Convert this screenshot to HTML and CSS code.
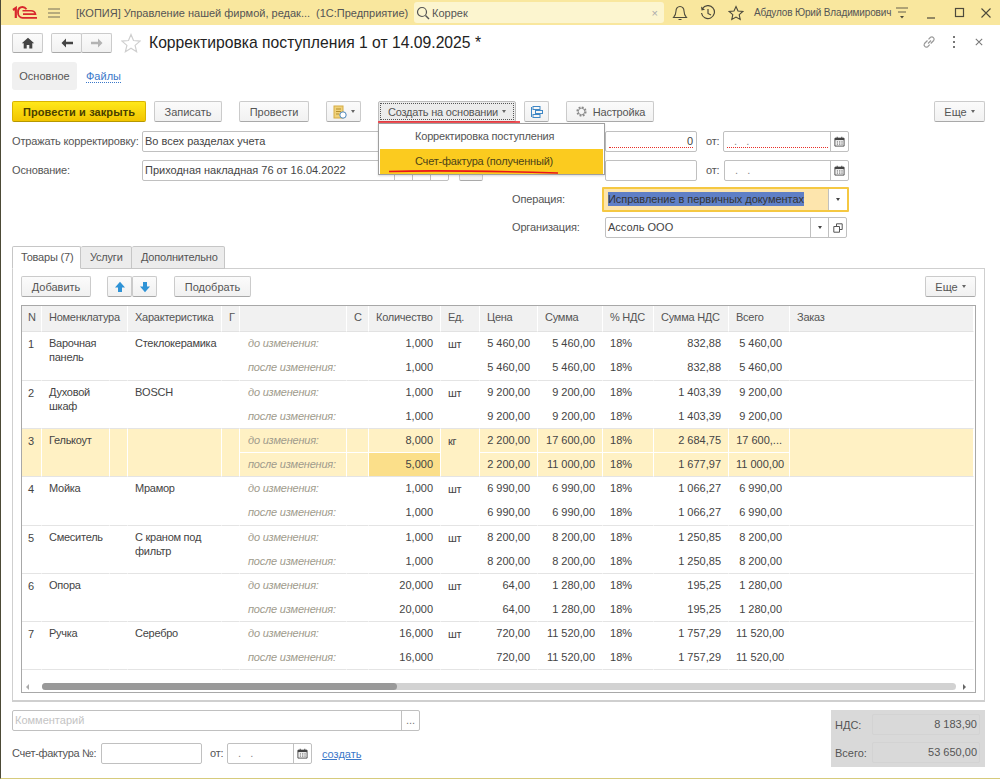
FILE: index.html
```html
<!DOCTYPE html>
<html lang="ru">
<head>
<meta charset="utf-8">
<title>Корректировка поступления</title>
<link rel="stylesheet" href="styles.css">
</head>
<body>
<div class="window">
  <header class="titlebar">
    <svg class="logo" viewBox="0 0 25 13" width="25" height="13"><path d="M1 4l2.800-2V12" stroke="#d8262c" stroke-width="2.200" fill="none"/><path d="M14.500 3.200C13.500 1.800 12.300 1 10.500 1 7.500 1 6 3.500 6 6.500s2 5.300 4.500 5.300H25" stroke="#d8262c" stroke-width="1.800" fill="none"/><path d="M10.500 4.800H19c2.500 0 4 1 4.500 3.300H11" stroke="#d8262c" stroke-width="1.600" fill="none"/></svg>
    <svg class="ti menu" viewBox="0 0 14 12" width="14" height="12"><path d="M1 2h12M1 6h12M1 10h12" stroke="#77705a" stroke-width="1.200" fill="none"/></svg>
    <span class="apptitle">[КОПИЯ] Управление нашей фирмой, редак...</span>
    <span class="appname">(1С:Предприятие)</span>
    <div class="search">
      <svg viewBox="0 0 14 14" width="14" height="14"><circle cx="6" cy="6" r="4.500" stroke="#555" stroke-width="1.200" fill="none"/><path d="M9.500 9.500L13 13" stroke="#555" stroke-width="1.400"/></svg>
      <span class="searchtext">Коррек</span>
      <span class="searchx">×</span>
    </div>
    <svg class="ti bell" viewBox="0 0 16 16" width="16" height="16"><path d="M8 1.500c-2.600 0-4 2-4 4.500 0 3-1.200 5-2.500 6.500h13C13.200 11 12 9 12 6c0-2.500-1.400-4.500-4-4.500zM6.500 14.500h3" stroke="#4d4a3c" stroke-width="1.100" fill="none"/></svg>
    <svg class="ti hist" viewBox="0 0 16 16" width="16" height="16"><path d="M2.500 3.500A6.500 6.500 0 1 1 1.500 8M8 4v4.500l3 1.500" stroke="#4d4a3c" stroke-width="1.200" fill="none"/><path d="M1 1.500l.5 4 3.500-.8z" fill="#4d4a3c"/></svg>
    <svg class="ti fav" viewBox="0 0 16 16" width="16" height="16"><path d="M8 1.500l2 4.500 4.800.5-3.600 3.200 1 4.800L8 12.100l-4.200 2.400 1-4.800L1.200 6.500 6 6z" stroke="#4d4a3c" stroke-width="1.100" fill="none"/></svg>
    <span class="user">Абдулов Юрий Владимирович</span>
    <svg class="ti usermenu" viewBox="0 0 14 14" width="14" height="14"><path d="M1 2h12M3 6h8" stroke="#66614c" stroke-width="1.200" fill="none"/><path d="M5 10h4l-2 2.500z" fill="#4d4a3c"/></svg>
    <svg class="ti wmin" viewBox="0 0 12 12" width="12" height="12"><path d="M2 11h8" stroke="#4d4a3c" stroke-width="1.200"/></svg>
    <svg class="ti wmax" viewBox="0 0 12 12" width="12" height="12"><rect x="1.500" y="1.500" width="8" height="8" stroke="#4d4a3c" stroke-width="1.200" fill="none"/></svg>
    <svg class="ti wclose" viewBox="0 0 12 12" width="12" height="12"><path d="M1.500 1.500l9 9M10.500 1.500l-9 9" stroke="#4d4a3c" stroke-width="1.100"/></svg>
  </header>

  <main class="form">
    <div class="head">
      <button class="btn home"><svg viewBox="0 0 14 12" width="14" height="12"><path d="M7 .8L.8 6.200h1.900V11.500h3V8h2.600v3.500h3V6.200h1.900z" fill="#444"/></svg></button>
      <div class="navpair">
        <button class="btn nav"><svg viewBox="0 0 14 12" width="14" height="12"><path d="M6 1.500L1.500 6 6 10.500V7.300h7V4.700H6z" fill="#444"/></svg></button>
        <button class="btn nav"><svg viewBox="0 0 14 12" width="14" height="12"><path d="M8 1.500L12.500 6 8 10.500V7.300H1V4.700h7z" fill="#b3b3b3"/></svg></button>
      </div>
      <svg class="star" viewBox="0 0 20 20" width="20" height="20"><path d="M10 1.500l2.500 6 6.500.6-4.900 4.300 1.500 6.300L10 15.300l-5.600 3.400 1.500-6.300L1 8.100l6.500-.6z" stroke="#cfcfcf" stroke-width="1.200" fill="#fff"/></svg>
      <h1 class="doctitle">Корректировка поступления 1 от 14.09.2025 *</h1>
      <div class="headicons">
        <svg viewBox="0 0 14 14" width="14" height="14"><path d="M6 8.500l3-3M5.500 5.500L2.500 8.500a2.300 2.300 0 0 0 3.200 3.200l2-2M6.500 4.300l2-2a2.300 2.300 0 0 1 3.200 3.200l-3 3" stroke="#999" stroke-width="1.200" fill="none"/></svg>
        <svg class="dots" viewBox="0 0 6 14" width="6" height="14"><path d="M3 1v2M3 6v2M3 11v2" stroke="#777" stroke-width="2"/></svg>
        <svg class="closex" viewBox="0 0 10 10" width="8" height="8"><path d="M1 1l8 8M9 1L1 9" stroke="#777" stroke-width="1.300"/></svg>
      </div>
    </div>

    <nav class="pages">
      <span class="page-active">Основное</span>
      <a class="page-link">Файлы</a>
    </nav>

    <div class="cmdbar">
      <button class="btn primary w-post">Провести и закрыть</button>
      <button class="btn w-save">Записать</button>
      <button class="btn w-conduct">Провести</button>
      <button class="btn w-print"><svg viewBox="0 0 14 14" width="14" height="14"><rect x="1" y="1" width="9" height="12" fill="#f0d27a" stroke="#d5ab45"/><path d="M3 4h5M3 6.500h5M3 9h3" stroke="#b58e2c"/><circle cx="10" cy="10" r="3.200" fill="#fff" stroke="#4a84b8"/></svg><i class="caret"></i></button>
      <button class="btn w-create"><span class="focus">Создать на основании<i class="caret"></i></span></button>
      <button class="btn w-struct"><svg viewBox="0 0 14 14" width="14" height="14"><rect x="3" y="1.500" width="7" height="3" fill="none" stroke="#3f87c5"/><rect x="5.500" y="5.500" width="7" height="3" fill="none" stroke="#3f87c5"/><rect x="3" y="9.500" width="7" height="3" fill="none" stroke="#3f87c5"/><path d="M1.500 2v10" stroke="#3f87c5"/></svg></button>
      <button class="btn w-setup"><svg viewBox="0 0 14 14" width="13" height="13"><circle cx="7" cy="7" r="4.500" fill="none" stroke="#8a8a8a" stroke-width="2" stroke-dasharray="2 1.500"/><circle cx="7" cy="7" r="3.500" fill="none" stroke="#8a8a8a"/></svg>Настройка</button>
      <button class="btn more w-more">Еще <i class="caret"></i></button>
    </div>

    <div class="fields">
      <div class="row">
        <label class="lbl lbl-main">Отражать корректировку:</label>
        <div class="input w-reflect">Во всех разделах учета</div>
        <span class="gap-number"></span>
        <div class="input num req w-number"><span class="val">0</span></div>
        <label class="lbl lbl-from lbl-from1">от:</label>
        <div class="input date req w-date"><span class="mask">.&nbsp;&nbsp;&nbsp;.</span><span class="calbtn"><svg viewBox="0 0 12 12" width="11" height="11"><use href="#cal"/></svg></span></div>
      </div>
      <div class="row">
        <label class="lbl lbl-main">Основание:</label>
        <div class="input w-base">Приходная накладная 76 от 16.04.2022<span class="fbtn"></span><span class="fbtn"></span><span class="fbtn"></span></div>
        <button class="btn w-basebtn"></button>
        <span class="gap-doc"></span>
        <div class="input w-number2"></div>
        <label class="lbl lbl-from">от:</label>
        <div class="input date w-date2"><span class="mask">.&nbsp;&nbsp;&nbsp;.</span><span class="calbtn"><svg viewBox="0 0 12 12" width="11" height="11"><use href="#cal"/></svg></span></div>
      </div>
      <div class="row row-op">
        <label class="lbl lbl-right">Операция:</label>
        <div class="input focused"><span class="selection">Исправление в первичных документах</span><span class="dropbtn"><i class="caret dark"></i></span></div>
      </div>
      <div class="row row-org">
        <label class="lbl lbl-right">Организация:</label>
        <div class="input w-org">Ассоль ООО<span class="dropbtn"><i class="caret dark"></i></span><span class="openbtn"><svg viewBox="0 0 10 10" width="10" height="10"><path d="M3.500 3V.8h5.700v5.700H7M.8 3.500h5.700v5.700H.8z" stroke="#555" fill="none"/></svg></span></div>
      </div>
    </div>

    <div class="tabs">
      <span class="tab tab-active">Товары (7)</span>
      <span class="tab">Услуги</span>
      <span class="tab">Дополнительно</span>
    </div>

    <section class="panel">
      <div class="tblbar">
        <button class="btn w-add">Добавить</button>
        <div class="arrows">
          <button class="btn arrow"><svg viewBox="0 0 12 12" width="12" height="12"><path d="M6 .8L11 6.500H8V11H4V6.500H1z" fill="#2f93d6"/></svg></button>
          <button class="btn arrow"><svg viewBox="0 0 12 12" width="12" height="12"><path d="M6 11.200L11 5.500H8V1H4v4.500H1z" fill="#2f93d6"/></svg></button>
        </div>
        <button class="btn w-pick">Подобрать</button>
        <button class="btn more w-more2">Еще <i class="caret"></i></button>
      </div>
      <div class="grid">
        <table class="goods">
          <colgroup>
            <col class="c-n"><col class="c-name"><col class="c-name2"><col class="c-char"><col class="c-g"><col class="c-note"><col class="c-s"><col class="c-qty"><col class="c-ed"><col class="c-price"><col class="c-sum"><col class="c-vat"><col class="c-vatsum"><col class="c-total"><col class="c-order">
          </colgroup>
          <thead>
            <tr><th>N</th><th colspan="2">Номенклатура</th><th>Характеристика</th><th>Г</th><th></th><th>С</th><th>Количество</th><th>Ед.</th><th>Цена</th><th>Сумма</th><th>% НДС</th><th>Сумма НДС</th><th>Всего</th><th>Заказ</th></tr>
          </thead>
          <tbody>
            <tr><td rowspan="2" class="top">1</td><td rowspan="2" class="top tight">Варочная панель</td><td rowspan="2"></td><td rowspan="2" class="top tight">Стеклокерамика</td><td rowspan="2"></td><td class="note">до изменения:</td><td></td><td class="r">1,000</td><td rowspan="2" class="top">шт</td><td class="r">5 460,00</td><td class="r">5 460,00</td><td>18%</td><td class="r">832,88</td><td class="r">5 460,00</td><td rowspan="2"></td></tr>
            <tr class="end tall"><td class="note">после изменения:</td><td></td><td class="r">1,000</td><td class="r">5 460,00</td><td class="r">5 460,00</td><td>18%</td><td class="r">832,88</td><td class="r">5 460,00</td></tr>

            <tr><td rowspan="2" class="top">2</td><td rowspan="2" class="top tight">Духовой шкаф</td><td rowspan="2"></td><td rowspan="2" class="top tight">BOSCH</td><td rowspan="2"></td><td class="note">до изменения:</td><td></td><td class="r">1,000</td><td rowspan="2" class="top">шт</td><td class="r">9 200,00</td><td class="r">9 200,00</td><td>18%</td><td class="r">1 403,39</td><td class="r">9 200,00</td><td rowspan="2"></td></tr>
            <tr class="end"><td class="note">после изменения:</td><td></td><td class="r">1,000</td><td class="r">9 200,00</td><td class="r">9 200,00</td><td>18%</td><td class="r">1 403,39</td><td class="r">9 200,00</td></tr>

            <tr class="hl"><td rowspan="2" class="top">3</td><td rowspan="2" class="top tight">Гелькоут</td><td rowspan="2"></td><td rowspan="2" class="top tight"></td><td rowspan="2"></td><td class="note">до изменения:</td><td></td><td class="r">8,000</td><td rowspan="2" class="top">кг</td><td class="r">2 200,00</td><td class="r">17 600,00</td><td>18%</td><td class="r">2 684,75</td><td class="r">17 600,...</td><td rowspan="2"></td></tr>
            <tr class="hl end"><td class="note">после изменения:</td><td></td><td class="r changed">5,000</td><td class="r">2 200,00</td><td class="r">11 000,00</td><td>18%</td><td class="r">1 677,97</td><td class="r">11 000,00</td></tr>

            <tr><td rowspan="2" class="top">4</td><td rowspan="2" class="top tight">Мойка</td><td rowspan="2"></td><td rowspan="2" class="top tight">Мрамор</td><td rowspan="2"></td><td class="note">до изменения:</td><td></td><td class="r">1,000</td><td rowspan="2" class="top">шт</td><td class="r">6 990,00</td><td class="r">6 990,00</td><td>18%</td><td class="r">1 066,27</td><td class="r">6 990,00</td><td rowspan="2"></td></tr>
            <tr class="end tall"><td class="note">после изменения:</td><td></td><td class="r">1,000</td><td class="r">6 990,00</td><td class="r">6 990,00</td><td>18%</td><td class="r">1 066,27</td><td class="r">6 990,00</td></tr>

            <tr><td rowspan="2" class="top">5</td><td rowspan="2" class="top tight">Смеситель</td><td rowspan="2"></td><td rowspan="2" class="top tight">С краном под фильтр</td><td rowspan="2"></td><td class="note">до изменения:</td><td></td><td class="r">1,000</td><td rowspan="2" class="top">шт</td><td class="r">8 200,00</td><td class="r">8 200,00</td><td>18%</td><td class="r">1 250,85</td><td class="r">8 200,00</td><td rowspan="2"></td></tr>
            <tr class="end"><td class="note">после изменения:</td><td></td><td class="r">1,000</td><td class="r">8 200,00</td><td class="r">8 200,00</td><td>18%</td><td class="r">1 250,85</td><td class="r">8 200,00</td></tr>

            <tr><td rowspan="2" class="top">6</td><td rowspan="2" class="top tight">Опора</td><td rowspan="2"></td><td rowspan="2" class="top tight"></td><td rowspan="2"></td><td class="note">до изменения:</td><td></td><td class="r">20,000</td><td rowspan="2" class="top">шт</td><td class="r">64,00</td><td class="r">1 280,00</td><td>18%</td><td class="r">195,25</td><td class="r">1 280,00</td><td rowspan="2"></td></tr>
            <tr class="end"><td class="note">после изменения:</td><td></td><td class="r">20,000</td><td class="r">64,00</td><td class="r">1 280,00</td><td>18%</td><td class="r">195,25</td><td class="r">1 280,00</td></tr>

            <tr><td rowspan="2" class="top">7</td><td rowspan="2" class="top tight">Ручка</td><td rowspan="2"></td><td rowspan="2" class="top tight">Серебро</td><td rowspan="2"></td><td class="note">до изменения:</td><td></td><td class="r">16,000</td><td rowspan="2" class="top">шт</td><td class="r">720,00</td><td class="r">11 520,00</td><td>18%</td><td class="r">1 757,29</td><td class="r">11 520,00</td><td rowspan="2"></td></tr>
            <tr class="end"><td class="note">после изменения:</td><td></td><td class="r">16,000</td><td class="r">720,00</td><td class="r">11 520,00</td><td>18%</td><td class="r">1 757,29</td><td class="r">11 520,00</td></tr>
          </tbody>
        </table>
        <div class="hscroll">
          <i class="sarrow left"></i>
          <div class="track"><div class="thumb"></div></div>
          <i class="sarrow right"></i>
        </div>
      </div>
    </section>

    <footer class="bottom">
      <div class="bottom-left">
        <div class="input comment"><span class="placeholder">Комментарий</span><span class="dotsbtn">...</span></div>
        <div class="invoice">
          <label class="lbl lbl-inv">Счет-фактура №:</label>
          <div class="input w-inv"></div>
          <label class="lbl lbl-invfrom">от:</label>
          <div class="input date w-invdate"><span class="mask">.&nbsp;&nbsp;&nbsp;.</span><span class="calbtn"><svg viewBox="0 0 12 12" width="11" height="11"><use href="#cal"/></svg></span></div>
          <a class="create">создать</a>
        </div>
      </div>
      <aside class="totals">
        <div class="tot"><span class="totlbl">НДС:</span><span class="totval">8 183,90</span></div>
        <div class="tot"><span class="totlbl">Всего:</span><span class="totval">53 650,00</span></div>
      </aside>
    </footer>

    <div class="popup">
      <div class="pitem">Корректировка поступления</div>
      <div class="pitem pitem-active">Счет-фактура (полученный)</div>
    </div>
    <svg class="redlines" viewBox="0 0 240 60" width="240" height="60"><path d="M0 1h142" stroke="#e8141c" stroke-width="1.600" fill="none"/><path d="M11 50.500C60 49 110 50 180 52" stroke="#e8141c" stroke-width="1.600" fill="none"/></svg>
  </main>
  <svg class="defs" width="0" height="0"><symbol id="cal" viewBox="0 0 12 12"><path d="M1 2.500h10V11H1z" fill="none" stroke="#444"/><path d="M1 2h10v2.500H1z" fill="#444"/><path d="M3 6.500h1.500M5.500 6.500H7M8 6.500h1.500M3 8.800h1.500M5.500 8.800H7M8 8.800h1.500" stroke="#444"/><path d="M3.500 .8v2M8.500 .8v2" stroke="#444"/></symbol></svg>
</div>
</body>
</html>
```

FILE: styles.css
```css
* { box-sizing: border-box; }
html, body { margin: 0; padding: 0; }
body { font: 11px/14px "Liberation Sans", Arial, sans-serif; color: #444; background: #fff; }
.window { width: 1000px; height: 779px; border-left: 1px solid #4c4a36; border-bottom: 1px solid #d6cb7c; overflow: hidden; position: relative; background: #fff; }

.titlebar { height: 25px; background: #f9e79e; display: flex; align-items: center; color: #555; font-size: 11px; }
.logo { margin-left: 11px; flex: none; }
.menu { margin-left: 10px; }
.apptitle { margin-left: 15px; width: 240px; white-space: nowrap; }
.appname { white-space: nowrap; width: 98px; }
.search { width: 250px; height: 21px; background: #fcf5cf; border-radius: 3px; display: flex; align-items: center; padding: 0 6px 0 2px; }
.searchtext { margin-left: 2px; flex: 1; color: #555; }
.searchx { color: #aaa; }
.ti { flex: none; }
.bell { margin-left: 8px; }
.hist { margin-left: 12px; }
.fav { margin-left: 12px; }
.user { margin-left: 10px; width: 141px; white-space: nowrap; font-size: 10px; letter-spacing: -.15px; }
.usermenu { margin-left: 0; }
.wmin { margin-left: 16px; }
.wmax { margin-left: 17px; }
.wclose { margin-left: 14px; }

.form { position: relative; padding: 8px 15px 0 11px; }
.btn { display: inline-flex; align-items: center; justify-content: center; height: 21px; padding: 0; font: 11px "Liberation Sans", Arial, sans-serif; color: #555; background: linear-gradient(#fbfbfb, #f1f1f1); border: 1px solid #cbcbcb; border-bottom-color: #a9a9a9; border-radius: 2px; flex: none; }
.caret { display: inline-block; width: 0; height: 0; border: 2.5px solid transparent; border-top: 3px solid #666; border-bottom: 0; vertical-align: middle; margin-left: 4px; }
.caret.dark { border-top-color: #444; margin: 0; }

.head { display: flex; align-items: center; height: 20px; }
.home { width: 31px; height: 20px; }
.navpair { display: flex; margin-left: 8px; }
.nav { width: 31px; height: 20px; }
.nav + .nav { margin-left: -1px; }
.star { margin-left: 9px; flex: none; }
.doctitle { margin: 0 0 0 8px; font-size: 15.7px; font-weight: 400; color: #222; white-space: nowrap; line-height: 20px; }
.headicons { margin: -2px 0 0 auto; display: flex; align-items: center; }
.dots { margin-left: 15px; }
.closex { margin-left: 18px; margin-right: 2px; }

.pages { display: flex; align-items: center; height: 28px; margin-top: 9px; }
.page-active { width: 65px; height: 28px; background: #f0f0f0; border-radius: 3px; line-height: 28px; text-align: center; color: #555; }
.page-link { margin-left: 9px; color: #3b78c9; border-bottom: 1px dotted #3b78c9; line-height: 12px; }

.cmdbar { display: flex; margin-top: 11px; height: 21px; }
.primary { background: linear-gradient(#ffe81a, #f2c500); border-color: #d9b400; border-bottom-color: #b69800; color: #4a4000; font-weight: 700; letter-spacing: .1px; }
.w-post { width: 134px; }
.w-save { width: 68px; margin-left: 8px; }
.w-conduct { width: 70px; margin-left: 17px; }
.w-print { width: 35px; margin-left: 17px; }
.w-create { width: 138px; margin-left: 17px; background: #ececec; border-color: #bdbdbd; }
.focus { display: flex; align-items: center; justify-content: center; width: 134px; height: 17px; border: 1px dotted #555; white-space: nowrap; letter-spacing: -.2px; }
.w-struct { width: 25px; margin-left: 8px; }
.w-setup { width: 88px; margin-left: 17px; letter-spacing: -.2px; }
.w-setup svg { margin-right: 5px; }
.more { margin-left: auto; width: 51px; }

.fields { margin-top: 9px; }
.row { display: flex; align-items: center; height: 21px; margin-bottom: 8px; white-space: nowrap; }
.lbl { color: #555; white-space: nowrap; letter-spacing: -.15px; padding-bottom: 2px; }
.lbl-main { width: 130px; flex: none; }
.input { height: 21px; border: 1px solid #c0c0c0; border-radius: 2px; background: #fff; display: flex; align-items: center; padding-left: 2px; padding-bottom: 2px; color: #444; flex: none; position: relative; }
.calbtn, .fbtn, .dropbtn, .openbtn, .dotsbtn { height: calc(100% + 2px); margin-bottom: -2px; }
.w-reflect { width: 320px; }
.gap-number { width: 143px; flex: none; }
.w-number { width: 92px; }
.req::after { content: ""; position: absolute; left: 3px; right: 3px; bottom: 3px; border-bottom: 1px dotted #e8302a; }
.date.req::after { right: 20px; }
.num { justify-content: flex-end; padding-right: 3px; }
.lbl-from { margin-left: 9px; width: 18px; flex: none; }
.lbl-from1 { width: 17px; }
.w-date { width: 126px; }
.date { padding-left: 0; }
.mask { margin-left: 10px; flex: 1; color: #888; }
.calbtn { width: 18px; border-left: 1px solid #c0c0c0; display: flex; align-items: center; justify-content: center; }
.w-base { width: 307px; padding-right: 0; }
.fbtn { width: 18px; border-left: 1px solid #c0c0c0; flex: none; }
.fbtn:first-of-type { margin-left: auto; }
.w-basebtn { width: 24px; margin-left: 10px; }
.gap-doc { width: 122px; flex: none; }
.w-number2 { width: 92px; }
.w-date2 { width: 125px; }

.row-op { height: 25px; margin: -2px 0 5px; }
.lbl-right { width: 90px; margin-left: 500px; flex: none; }
.focused { width: 247px; height: 25px; border: 2px solid #f5c842; background: #fde5ad; border-radius: 1px; padding-left: 4px; }
.selection { background: #5f7fc6; color: #333; line-height: 14px; letter-spacing: -.05px; }
.dropbtn { width: 18px; border-left: 1px solid #c0c0c0; display: flex; align-items: center; justify-content: center; margin-left: auto; flex: none; }
.focused .dropbtn { width: 19px; background: #fff; }
.row-org { margin: 0 0 8px; }
.row-org .lbl-right { width: 93px; }
.w-org { width: 242px; padding-right: 0; }
.openbtn { width: 18px; border-left: 1px solid #c0c0c0; display: flex; align-items: center; justify-content: center; flex: none; }

.tabs { display: flex; height: 23px; position: relative; z-index: 1; }
.tab { height: 23px; padding: 0 0 0 9px; background: #ececec; border: 1px solid #c6c6c6; border-left: 0; border-radius: 2px 2px 0 0; line-height: 21px; color: #555; white-space: nowrap; letter-spacing: -.2px; }
.tab-active { width: 69px; padding-left: 8px; background: #fff; border-left: 1px solid #c6c6c6; border-bottom-color: #fff; }
.tab:nth-child(2) { width: 51px; }
.tab:nth-child(3) { width: 93px; }

.panel { height: 434px; margin-top: -1px; border: 1px solid #cfcfcf; border-bottom-width: 2px; padding: 7px 8px 0; }
.tblbar { display: flex; height: 21px; }
.w-add { width: 70px; }
.arrows { display: flex; margin-left: 16px; }
.arrow { width: 25px; }
.w-pick { width: 77px; margin-left: 17px; }
.w-more2 { margin-left: auto; }

.grid { margin-top: 8px; height: 388px; border: 1px solid #a8a8a8; position: relative; }
.goods { table-layout: fixed; width: 952px; border-collapse: separate; border-spacing: 0; color: #444; }
.c-n { width: 20px; } .c-name { width: 68px; } .c-name2 { width: 18px; } .c-char { width: 94px; } .c-g { width: 18px; } .c-note { width: 107px; } .c-s { width: 22px; } .c-qty { width: 72px; } .c-ed { width: 39px; } .c-price { width: 58px; } .c-sum { width: 65px; } .c-vat { width: 51px; } .c-vatsum { width: 75px; } .c-total { width: 61px; } .c-order { width: 184px; }
.goods th { height: 26px; background: #f1f1f1; border-right: 1px solid #fff; border-bottom: 1px solid #e2e2e2; font-weight: 400; text-align: left; color: #555; padding: 0 0 3px 7px; white-space: nowrap; overflow: hidden; letter-spacing: -.25px; }
.goods th:first-child { padding-left: 6px; }
.goods td { height: 24px; padding: 0 7px 2px; vertical-align: middle; white-space: nowrap; overflow: hidden; border-right: 1px solid transparent; }
.goods td:first-child { padding-left: 6px; padding-right: 0; }
.goods td.top { vertical-align: top; padding-top: 5px; padding-bottom: 0; white-space: normal; letter-spacing: -.25px; }
.goods td.tight { padding-right: 0; line-height: 13.5px; }
.goods td.r { text-align: right; }
.goods td.note { font-style: italic; color: #a09b8c; padding-left: 8px; letter-spacing: -.2px; }
.goods tr.end td, .goods tr:not(.end) td[rowspan] { border-bottom: 1px solid #e4e4e4; }
.goods tr.tall td { height: 25px; }
.goods tr.hl td { background: #fff1c4; border-right-color: #fff; }
.goods tr.hl:not(.end) td:not([rowspan]) { border-bottom: 1px solid #fff; }
.goods tr.hl td.changed { background: #fbdf8a; }

.hscroll { position: absolute; left: 0; right: 0; bottom: 2px; height: 7px; display: flex; align-items: center; }
.track { width: 914px; height: 7px; margin-left: 13px; background: #d2d2d2; border-radius: 4px; }
.thumb { width: 355px; height: 7px; background: #999; border-radius: 4px; }
.sarrow { width: 0; height: 0; border: 3px solid transparent; flex: none; }
.sarrow.left { margin-left: 4px; border-right: 3px solid #aaa; border-left: 0; }
.sarrow.right { margin-left: 7px; border-left: 3px solid #666; border-right: 0; }

.bottom { display: flex; justify-content: space-between; margin-top: 8px; }
.bottom-left { width: 408px; }
.comment { width: 408px; padding-right: 0; }
.placeholder { color: #c4c4c4; flex: 1; }
.dotsbtn { width: 18px; border-left: 1px solid #c0c0c0; text-align: center; color: #777; line-height: 19px; flex: none; }
.invoice { display: flex; align-items: center; margin-top: 12px; }
.lbl-inv { width: 84px; flex: none; letter-spacing: -.3px; }
.w-inv { width: 101px; margin-left: 5px; }
.lbl-invfrom { margin-left: 8px; width: 17px; flex: none; }
.w-invdate { width: 85px; }
.create { margin-left: 10px; color: #3b78c9; text-decoration: underline; white-space: nowrap; }
.totals { width: 154px; height: 57px; background: #d9d9d9; padding: 4px 5px 0 4px; }
.tot { display: flex; align-items: center; height: 21px; margin-bottom: 7px; color: #555; }
.totlbl { width: 37px; flex: none; }
.totval { flex: 1; height: 21px; line-height: 19px; text-align: right; border: 1px solid #d3d3d3; border-radius: 2px; padding-right: 2px; }

.popup { position: absolute; left: 377px; top: 98px; width: 227px; height: 52px; background: #fff; border: 1px solid #9f9f9f; padding: 0 1px; z-index: 5; box-shadow: 0 1px 2px rgba(0,0,0,.15); }
.pitem { height: 25px; line-height: 25px; padding-left: 35px; color: #555; letter-spacing: -.2px; }
.pitem-active { background: #fbcb1f; color: #4d4318; }
.redlines { position: absolute; left: 377px; top: 96px; z-index: 6; }
.defs { position: absolute; }
```
